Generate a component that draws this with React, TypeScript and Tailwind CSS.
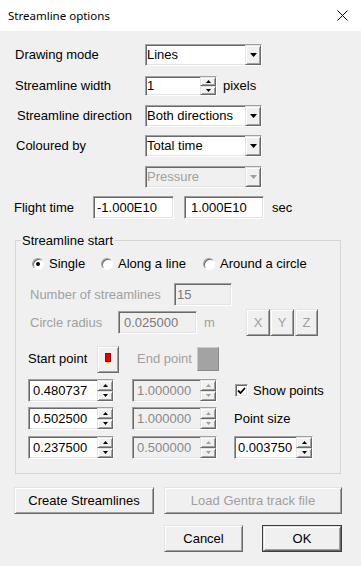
import type { ReactNode } from 'react'

const sunken =
  'border border-t-[#a0a0a0] border-l-[#a0a0a0] border-r-white border-b-white shadow-[inset_1px_1px_0_#696969,inset_-1px_-1px_0_#e3e3e3]'
const raised =
  'border border-t-[#e3e3e3] border-l-[#e3e3e3] border-r-[#696969] border-b-[#696969] shadow-[inset_1px_1px_0_#ffffff,inset_-1px_-1px_0_#a0a0a0] bg-[#f0f0f0]'

function Arrow({ disabled, up, size = 'sm' }: { disabled?: boolean; up?: boolean; size?: 'sm' | 'lg' }) {
  const w = size === 'lg' ? 7 : 5
  const h = size === 'lg' ? 4 : 3
  const pts = up ? `0,${h} ${w / 2},0 ${w},${h}` : `0,0 ${w},0 ${w / 2},${h}`
  return (
    <svg width={w} height={h} viewBox={`0 0 ${w} ${h}`} className="block">
      <polygon points={pts} fill={disabled ? '#a0a0a0' : '#000'} />
    </svg>
  )
}

function Select({ value, disabled, className }: { value: string; disabled?: boolean; className: string }) {
  return (
    <div className={`flex h-[22px] ${sunken} ${disabled ? 'bg-[#f0f0f0]' : 'bg-white'} ${className}`}>
      <span className={`flex-1 pl-[1px] leading-[20px] ${disabled ? 'text-[#a0a0a0]' : 'text-black'}`}>{value}</span>
      <span className={`flex w-[16px] items-center justify-center ${raised}`}>
        <Arrow disabled={disabled} size="lg" />
      </span>
    </div>
  )
}

function Spin({ value, disabled, className, h = 'h-[23px]', pad = 'pl-[4px]' }: { value: string; disabled?: boolean; className: string; h?: string; pad?: string }) {
  return (
    <div className={`flex ${h} ${sunken} ${disabled ? 'bg-[#f0f0f0]' : 'bg-white'} ${className}`}>
      <span className={`flex-1 ${pad} flex items-center ${disabled ? 'text-[#8a8a8a]' : 'text-black'}`}>{value}</span>
      <span className="flex w-[16px] flex-col">
        <span className={`flex flex-1 items-center justify-center ${raised}`}>
          <Arrow disabled={disabled} up />
        </span>
        <span className={`flex flex-1 items-center justify-center ${raised}`}>
          <Arrow disabled={disabled} />
        </span>
      </span>
    </div>
  )
}

function TextBox({ value, className, pad }: { value: string; className: string; pad: string }) {
  return (
    <div className={`flex h-[23px] items-center bg-white ${sunken} ${pad} ${className}`}>{value}</div>
  )
}

function Radio({ checked, label, className }: { checked?: boolean; label: string; className: string }) {
  return (
    <div className={`flex items-center ${className}`}>
      <span className="flex h-[12px] w-[12px] items-center justify-center rounded-full border border-[#a0a0a0] border-r-white border-b-white bg-white shadow-[inset_1px_1px_0_#696969]">
        {checked && <span className="h-[4px] w-[4px] rounded-full bg-black" />}
      </span>
      <span className="ml-[5px]">{label}</span>
    </div>
  )
}

function Button({ children, className, disabled }: { children: ReactNode; className: string; disabled?: boolean }) {
  return (
    <div className={`flex h-[27px] items-center justify-center ${raised} ${disabled ? 'text-[#a0a0a0]' : 'text-black'} ${className}`}>
      {children}
    </div>
  )
}

export default function App() {
  return (
    <div className="flex h-[566px] w-[361px] flex-col bg-[#f0f0f0] font-['Liberation_Sans',Arial,sans-serif] text-[13px] text-black">
      <div className="flex h-[31px] items-center justify-between bg-white pl-[8px] pr-[13px]">
        <span className="font-['Noto_Sans',sans-serif] text-[11.5px]">Streamline options</span>
        <svg width="11" height="11" viewBox="0 0 11 11">
          <path d="M0.5 0.5 L10.5 10.5 M10.5 0.5 L0.5 10.5" stroke="#000" strokeWidth="1" />
        </svg>
      </div>

      <div className="mt-[13px] flex h-[22px] items-center">
        <span className="ml-[15px] w-[130px]">Drawing mode</span>
        <Select value="Lines" className="w-[117px]" />
      </div>

      <div className="mt-[10px] flex h-[20px] items-center">
        <span className="ml-[15px] w-[130px]">Streamline width</span>
        <Spin value="1" className="w-[72px]" h="h-[20px]" pad="pl-[1px]" />
        <span className="ml-[6px]">pixels</span>
      </div>

      <div className="mt-[9px] flex h-[22px] items-center">
        <span className="ml-[17px] w-[128px]">Streamline direction</span>
        <Select value="Both directions" className="w-[117px]" />
      </div>

      <div className="mt-[8px] flex h-[22px] items-center">
        <span className="ml-[16px] w-[129px]">Coloured by</span>
        <Select value="Total time" className="w-[117px]" />
      </div>

      <div className="mt-[9px] flex h-[22px] items-center">
        <Select value="Pressure" disabled className="ml-[145px] w-[117px]" />
      </div>

      <div className="mt-[8px] flex h-[23px] items-center">
        <span className="ml-[14px] w-[79px]">Flight time</span>
        <TextBox value="-1.000E10" className="w-[81px]" pad="pl-[3px]" />
        <TextBox value="1.000E10" className="ml-[10px] w-[80px]" pad="pl-[6px]" />
        <span className="ml-[8px]">sec</span>
      </div>

      <fieldset className="mt-[14px] ml-[15px] w-[326px] border border-[#d5d5d5] pb-[14px]">
        <legend className="ml-[5px] px-[1px] leading-[15px]">Streamline start</legend>

        <div className="mt-[8px] flex h-[16px] items-center pl-[16px]">
          <Radio checked label="Single" className="w-[69px]" />
          <Radio label="Along a line" className="w-[102px]" />
          <Radio label="Around a circle" className="" />
        </div>

        <div className="mt-[11px] flex h-[23px] items-center text-[#a0a0a0]">
          <span className="ml-[14px] w-[144px]">Number of streamlines</span>
          <div className={`flex h-[23px] w-[58px] items-center pl-[2px] text-[#7a7a7a] ${sunken}`}>15</div>
        </div>

        <div className="mt-[5px] flex h-[23px] items-center text-[#a0a0a0]">
          <span className="ml-[14px] w-[88px]">Circle radius</span>
          <div className={`flex h-[23px] w-[79px] items-center pl-[5px] text-[#7a7a7a] ${sunken}`}>0.025000</div>
          <span className="ml-[7px] w-[42px]">m</span>
          <Button disabled className="h-[23px] w-[24px]">X</Button>
          <Button disabled className="h-[23px] w-[24px]">Y</Button>
          <Button disabled className="ml-[1px] h-[23px] w-[23px]">Z</Button>
        </div>

        <div className="mt-[13px] flex h-[24px] items-center">
          <span className="ml-[12px] w-[69px]">Start point</span>
          <Button className="h-[24px] w-[22px]">
            <svg width="6" height="12" viewBox="0 0 6 12">
              <rect x="0.5" y="0.5" width="5" height="8" fill="#e00000" stroke="#a00000" strokeWidth="1" />
              <polygon points="1,9 5,9 3,11.5" fill="#f5d000" />
            </svg>
          </Button>
          <span className="ml-[18px] w-[60px] text-[#a0a0a0]">End point</span>
          <div className="h-[24px] w-[22px] border border-[#c8c8c8] border-r-[#8a8a8a] border-b-[#8a8a8a] bg-[#a3a3a3]" />
        </div>

        <div className="mt-[8px] flex h-[23px] items-center">
          <Spin value="0.480737" className="ml-[12px] w-[86px]" />
          <Spin value="1.000000" disabled className="ml-[18px] w-[85px]" />
          <div className="ml-[18px] flex items-center">
            <span className={`flex h-[13px] w-[13px] items-center justify-center bg-white ${sunken}`}>
              <svg width="9" height="8" viewBox="0 0 9 8">
                <path d="M1 3.5 L3.5 6 L8 1" stroke="#000" strokeWidth="1.8" fill="none" />
              </svg>
            </span>
            <span className="ml-[5px]">Show points</span>
          </div>
        </div>

        <div className="mt-[5px] flex h-[23px] items-center">
          <Spin value="0.502500" className="ml-[12px] w-[86px]" />
          <Spin value="1.000000" disabled className="ml-[18px] w-[85px]" />
          <span className="ml-[17px]">Point size</span>
        </div>

        <div className="mt-[6px] flex h-[23px] items-center">
          <Spin value="0.237500" className="ml-[12px] w-[86px]" />
          <Spin value="0.500000" disabled className="ml-[18px] w-[85px]" />
          <Spin value="0.003750" className="ml-[17px] w-[79px]" pad="pl-[3px]" />
        </div>
      </fieldset>

      <div className="mt-[13px] flex">
        <Button className="ml-[14px] w-[140px]">Create Streamlines</Button>
        <Button disabled className="ml-[10px] w-[178px]">Load Gentra track file</Button>
      </div>

      <div className="mt-[11px] flex">
        <Button className="ml-[164px] w-[79px]">Cancel</Button>
        <div className="ml-[19px] flex h-[27px] w-[80px] border border-[#3c3c3c]">
          <div className={`flex flex-1 items-center justify-center ${raised}`}>OK</div>
        </div>
      </div>
    </div>
  )
}
